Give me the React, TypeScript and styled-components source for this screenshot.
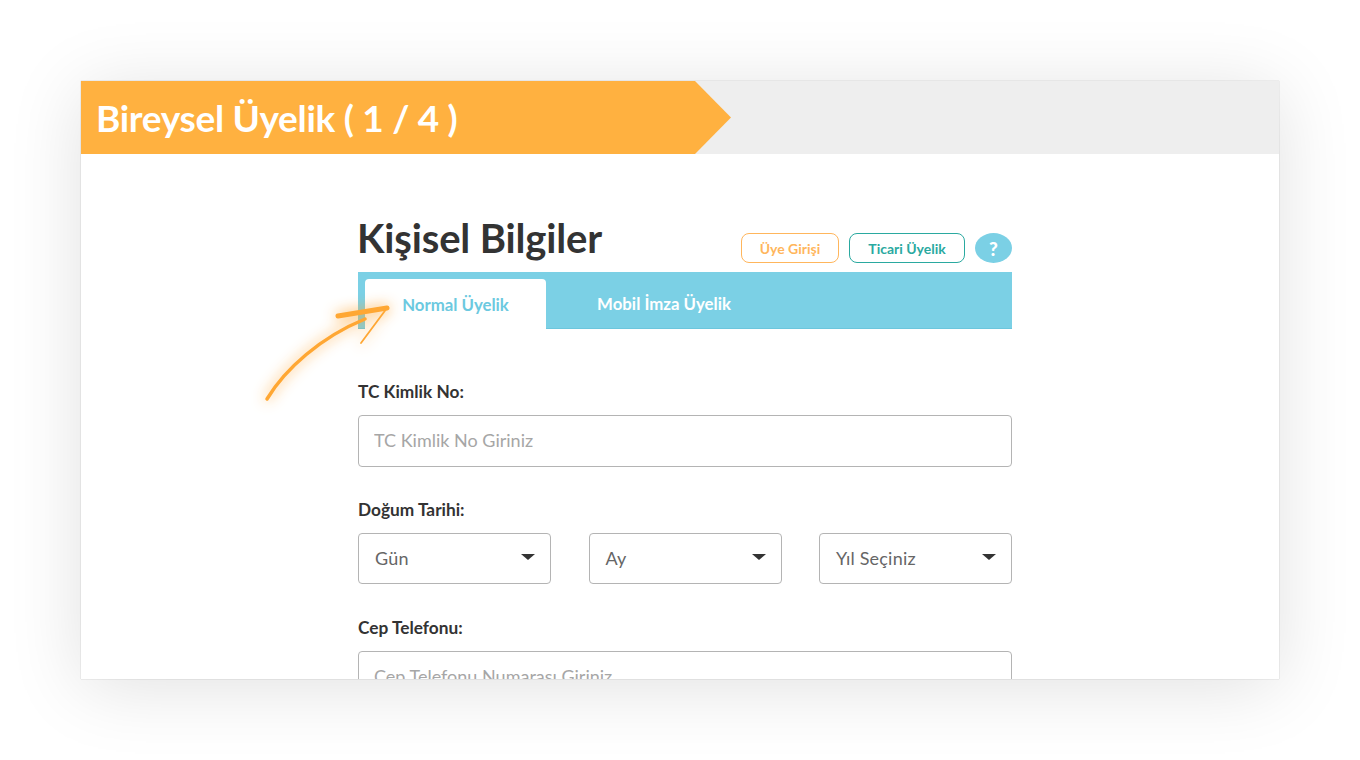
import React from "react";
import styled, { createGlobalStyle } from "styled-components";

const GlobalStyle = createGlobalStyle`
  html, body {
    margin: 0;
    padding: 0;
    background: #ffffff;
  }
  * {
    box-sizing: border-box;
  }
  body {
    font-family: "Lato", "Noto Sans", sans-serif;
    color: #333333;
  }
`;

const Page = styled.div`
  width: 1360px;
  height: 760px;
  overflow: hidden;
  padding: 81px 81px 0;
`;

const Card = styled.div`
  position: relative;
  width: 1198px;
  height: 598px;
  background: #ffffff;
  overflow: hidden;
  box-shadow: 0 0 1px rgba(0, 0, 0, 0.3), 0 8px 70px rgba(0, 0, 0, 0.12);
`;

const Header = styled.div`
  height: 73px;
  background: #eeeeee;
`;

const Ribbon = styled.div`
  width: 650px;
  height: 73px;
  padding: 0 0 0 15px;
  display: flex;
  align-items: center;
  background: #ffb140;
  clip-path: polygon(0 0, 614px 0, 650px 50%, 614px 100%, 0 100%);
  color: #ffffff;
  font-size: 37px;
  font-weight: 700;
  letter-spacing: -0.3px;
  white-space: nowrap;
`;

const Form = styled.div`
  width: 654px;
  margin-left: 277px;
`;

const TitleRow = styled.div`
  height: 118px;
  display: flex;
  align-items: flex-end;
  justify-content: space-between;
  padding-bottom: 9px;
`;

const Title = styled.h1`
  margin: 0 0 2px -1px;
  font-size: 40px;
  line-height: 46px;
  font-weight: 700;
  color: #333333;
  letter-spacing: -0.15px;
`;

const Actions = styled.div`
  display: flex;
  align-items: center;
  gap: 10px;
`;

const PillButton = styled.button<{ $color: string; $width: number }>`
  width: ${(p) => p.$width}px;
  height: 30px;
  margin: 0;
  padding: 0;
  border: 1px solid ${(p) => p.$color};
  border-radius: 8px;
  background: #ffffff;
  color: ${(p) => p.$color};
  font-family: inherit;
  font-size: 14px;
  font-weight: 700;
`;

const HelpButton = styled.button`
  width: 37px;
  height: 30px;
  padding: 0;
  border: 0;
  border-radius: 50%;
  background: #7bd0e5;
  color: #ffffff;
  font-family: inherit;
  font-size: 19px;
  font-weight: 900;
`;

const TabBar = styled.div`
  height: 57px;
  display: flex;
  align-items: flex-end;
  padding-left: 7px;
  background: #7bd0e5;
  border-bottom: 1px solid #6cc6dd;
`;

const Tab = styled.div<{ $active?: boolean }>`
  width: ${(p) => (p.$active ? "181px" : "236px")};
  height: ${(p) => (p.$active ? "50px" : "49px")};
  margin-bottom: ${(p) => (p.$active ? "-1px" : "0")};
  display: flex;
  align-items: center;
  justify-content: center;
  background: ${(p) => (p.$active ? "#ffffff" : "transparent")};
  border-radius: 4px 4px 0 0;
  color: ${(p) => (p.$active ? "#6cc9e0" : "#ffffff")};
  font-size: 16.8px;
  font-weight: 700;
`;

const Field = styled.div<{ $top: number }>`
  margin-top: ${(p) => p.$top}px;
`;

const Label = styled.div`
  height: 20px;
  margin-bottom: 13px;
  font-size: 17.3px;
  line-height: 20px;
  font-weight: 700;
  color: #333333;
`;

const Input = styled.input`
  display: block;
  width: 100%;
  height: 52px;
  padding: 0 15px 2px;
  border: 1px solid #b4b4b4;
  border-radius: 4px;
  background: #ffffff;
  font-family: inherit;
  font-size: 18px;
  outline: none;

  &::placeholder {
    color: #a6a6a6;
    opacity: 1;
  }
`;

const SelectRow = styled.div`
  display: grid;
  grid-template-columns: 193px 193px 193px;
  justify-content: space-between;
`;

const Select = styled.div`
  height: 51px;
  padding: 0 15px 1px 16px;
  display: flex;
  align-items: center;
  justify-content: space-between;
  border: 1px solid #b4b4b4;
  border-radius: 4px;
  background: #ffffff;
  color: #666666;
  font-size: 18px;
  letter-spacing: 0.2px;
`;

const Caret = styled.span`
  width: 0;
  height: 0;
  margin-bottom: 2px;
  border-left: 7px solid transparent;
  border-right: 7px solid transparent;
  border-top: 6px solid #333333;
`;

const ArrowMark = styled.svg`
  position: absolute;
  left: 170px;
  top: 210px;
  width: 150px;
  height: 130px;
  overflow: visible;
  filter: drop-shadow(0 0 7px rgba(255, 160, 40, 0.95));
`;

export default function App() {
  return (
    <>
      <GlobalStyle />
      <Page>
        <Card>
          <Header>
            <Ribbon>Bireysel Üyelik ( 1 / 4 )</Ribbon>
          </Header>
          <Form>
            <TitleRow>
              <Title>Kişisel Bilgiler</Title>
              <Actions>
                <PillButton $color="#ffb65c" $width={98}>Üye Girişi</PillButton>
                <PillButton $color="#2aa9a0" $width={116}>Ticari Üyelik</PillButton>
                <HelpButton>?</HelpButton>
              </Actions>
            </TitleRow>
            <TabBar>
              <Tab $active>Normal Üyelik</Tab>
              <Tab>Mobil İmza Üyelik</Tab>
            </TabBar>
            <Field $top={53}>
              <Label>TC Kimlik No:</Label>
              <Input placeholder="TC Kimlik No Giriniz" />
            </Field>
            <Field $top={33}>
              <Label>Doğum Tarihi:</Label>
              <SelectRow>
                <Select>Gün<Caret /></Select>
                <Select>Ay<Caret /></Select>
                <Select>Yıl Seçiniz<Caret /></Select>
              </SelectRow>
            </Field>
            <Field $top={34}>
              <Label>Cep Telefonu:</Label>
              <Input placeholder="Cep Telefonu Numarası Giriniz" />
            </Field>
          </Form>
          <ArrowMark viewBox="0 0 150 130">
            <path d="M16 108 C 34 78, 70 46, 114 28" fill="none" stroke="#ffa733" strokeWidth="3.5" strokeLinecap="round" />
            <path d="M87 25 L 136 17" fill="none" stroke="#ffa733" strokeWidth="5" strokeLinecap="round" />
            <path d="M136 17 L 110 52" fill="none" stroke="#ffa733" strokeWidth="1.8" strokeLinecap="round" />
          </ArrowMark>
        </Card>
      </Page>
    </>
  );
}
